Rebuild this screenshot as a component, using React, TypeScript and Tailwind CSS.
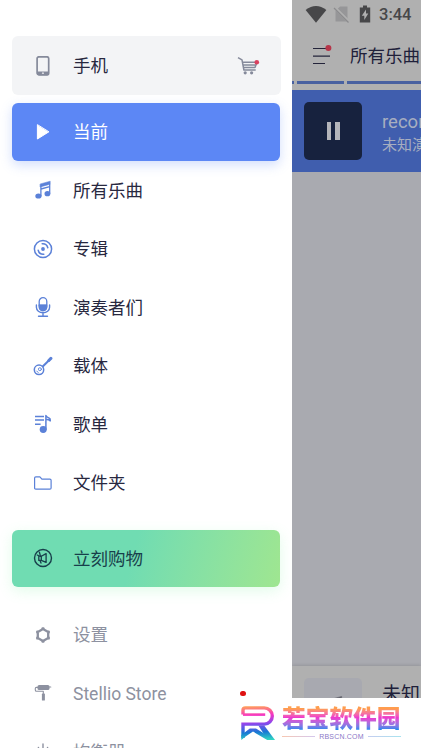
import type { ReactNode } from 'react';
import { clsx } from 'clsx';

const font = "font-['Roboto','Noto_Sans_CJK_SC',sans-serif]";

function Icon({ children, className }: { children: ReactNode; className?: string }) {
  return (
    <svg
      viewBox="0 0 20 20"
      className={clsx('shrink-0', className ?? 'size-5')}
      fill="none"
      stroke="currentColor"
      strokeWidth="1.4"
      strokeLinecap="round"
      strokeLinejoin="round"
    >
      {children}
    </svg>
  );
}

const PhoneIcon = () => (
  <Icon className="size-5 text-[#858a9b]">
    <rect x="4.1" y=".8" width="11.6" height="18" rx="1.8" strokeWidth="1.7" />
    <path d="M4 15.5h12v2.2q0 1.5-1.5 1.5h-9Q4 19.2 4 17.7Z" fill="currentColor" stroke="none" />
    <path d="M9.5 17.2h.9" stroke="#f3f4f6" strokeWidth="1.3" />
  </Icon>
);

const PlayIcon = () => (
  <Icon className="size-5 text-white">
    <path d="M4.4 3v14L15.6 10Z" fill="currentColor" strokeWidth="1" />
  </Icon>
);

const NotesIcon = ({ className }: { className?: string }) => (
  <Icon className={className}>
    <path d="M7.4 3.9 17.2 1.2v3L7.4 6.9Z" fill="currentColor" strokeWidth=".5" />
    <path d="M7.9 5v11M16.7 4.5v9M8 9l8.6-2.4" strokeWidth="1.3" />
    <ellipse cx="5.4" cy="16" rx="3.1" ry="2.6" fill="currentColor" stroke="none" />
    <ellipse cx="14.4" cy="13.7" rx="2.9" ry="2.6" fill="currentColor" stroke="none" />
  </Icon>
);

const DiscIcon = () => (
  <Icon>
    <circle cx="10" cy="10" r="8.6" strokeWidth="1.5" />
    <circle cx="10" cy="10" r="1.9" fill="currentColor" stroke="none" />
    <path d="M9.2 4.8a5.3 5.3 0 0 1 5.6 4M10.8 15.2a5.3 5.3 0 0 1-5.6-4" strokeWidth="1.5" />
  </Icon>
);

const MicIcon = () => (
  <Icon>
    <rect x="6.2" y=".7" width="7.6" height="12.9" rx="3.8" strokeWidth="1.3" />
    <path d="M6.2 7.8h7.6v2.3a3.8 3.8 0 0 1-7.6 0Z" fill="currentColor" strokeWidth=".8" />
    <path d="M3.4 8v2.2a6.6 5.6 0 0 0 13.2 0V8M10 16v3M5.5 19.2h9" strokeWidth="1.4" />
  </Icon>
);

const BanjoIcon = () => (
  <Icon>
    <circle cx="6" cy="13.8" r="4.7" strokeWidth="1.5" />
    <circle cx="6.9" cy="13.2" r="1.5" strokeWidth=".9" />
    <path d="m3.7 15 1.5 1.5" strokeWidth="1" />
    <path d="m9.7 10.4 6.4-6.1" strokeWidth="2.1" />
    <path d="m15.8 4.5 2.1-2.1" strokeWidth="3" />
  </Icon>
);

const PlaylistIcon = () => (
  <Icon>
    <path d="M2 2.5h9M2 6h9M2 10.3h5.6" strokeWidth="1.4" strokeLinecap="butt" />
    <ellipse cx="10.2" cy="15.5" rx="3.5" ry="3.4" fill="currentColor" stroke="none" />
    <path d="M12.9 15.5V1.5q1 2 3 2.4 1.7.6 1.4 2.9-1.8-1.5-4.4-1.2" strokeWidth="1.5" />
  </Icon>
);

const FolderIcon = () => (
  <Icon>
    <path
      d="M1.6 15V5q0-1.2 1.2-1.2h4.1l2 2.3h8q1.2 0 1.2 1.2V15q0 1.2-1.2 1.2H2.8Q1.6 16.2 1.6 15Z"
      strokeWidth="1.2"
    />
  </Icon>
);

const MegaphoneIcon = () => (
  <Icon className="size-5 text-[#183f4b]">
    <circle cx="10" cy="10" r="8.5" strokeWidth="1.4" />
    <path d="m8.3 8.2 4.8-2.6v8.8l-4.8-2H5.8V8.2ZM8.3 8.2v4.2M7 12.5l1 2.6M6.4 4.2l.9 3.2M4.2 7l4.2 2" strokeWidth="1.3" />
  </Icon>
);

const NutIcon = () => (
  <Icon>
    <path d="M10 4 15.2 7v6L10 16l-5.2-3V7Z" strokeWidth="2.3" />
    <path
      d="M9.6 3.5h.8M15.7 6.6v.7M15.7 12.8v.6M9.6 16.5h.8M4.3 12.8v.6M4.3 6.6v.7"
      strokeWidth="2.4"
    />
  </Icon>
);

const RollerIcon = () => (
  <Icon>
    <rect x="4.5" y="2.1" width="12" height="5" rx="1.6" fill="currentColor" stroke="none" />
    <path d="M16 4h1.8M4.9 4.4H3.4q-1.1 0-1.1 1.2V7q0 1.3 1.2 1.3h6.8v2.3" strokeWidth="1.1" />
    <rect x="8.9" y="10.6" width="3" height="7" rx=".6" fill="currentColor" stroke="none" />
  </Icon>
);

const EqualizerIcon = () => (
  <Icon>
    <path d="M5.4 5.5 7 9M10 2v8M14.6 5.5 13 9" strokeWidth="1.4" />
  </Icon>
);

const CartIcon = () => (
  <svg viewBox="0 0 24 20" className="h-5 w-6" fill="none" stroke="#858a9b" strokeWidth="1.5">
    <path d="M1 1.6 5 3.8l1.9 10.2h11.8M5.4 6.3H20l-2 5.2H6.6M6.1 9h12.7" strokeLinejoin="round" />
    <circle cx="8.2" cy="16.8" r="1.6" fill="#858a9b" stroke="none" />
    <circle cx="14.6" cy="16.8" r="1.6" fill="#858a9b" stroke="none" />
    <circle cx="19.8" cy="6.2" r="2.3" fill="#d9415f" stroke="none" />
  </svg>
);

const library = [
  { label: '所有乐曲', icon: <NotesIcon /> },
  { label: '专辑', icon: <DiscIcon /> },
  { label: '演奏者们', icon: <MicIcon /> },
  { label: '载体', icon: <BanjoIcon /> },
  { label: '歌单', icon: <PlaylistIcon /> },
  { label: '文件夹', icon: <FolderIcon /> },
];

function Row({ icon, label, className }: { icon: ReactNode; label: string; className?: string }) {
  return (
    <div className={clsx('flex shrink-0 items-center gap-5 pl-[21px] text-[17.5px] leading-none', className)}>
      {icon}
      <span className="pt-[2px] whitespace-nowrap">{label}</span>
    </div>
  );
}

function Drawer() {
  return (
    <nav className="flex h-full w-[292px] shrink-0 flex-col overflow-hidden bg-white pt-9 pr-[11.5px] pl-3 text-[#28283f]">
      <div className="flex h-[59px] shrink-0 items-center justify-between rounded-md bg-[#f3f4f6] pr-5">
        <Row icon={<PhoneIcon />} label="手机" />
        <CartIcon />
      </div>
      <Row
        icon={<PlayIcon />}
        label="当前"
        className="mt-2 mr-[0.5px] h-[57.5px] rounded-md bg-[#5c87f5] text-white shadow-[0_4px_12px_rgba(92,135,245,0.28)]"
      />
      <div className="mt-[0.5px] flex flex-col text-[#5b81d8]">
        {library.map((item) => (
          <Row
            key={item.label}
            icon={item.icon}
            label={item.label}
            className="h-[58.5px] [&>span]:text-[#28283f]"
          />
        ))}
      </div>
      <Row
        icon={<MegaphoneIcon />}
        label="立刻购物"
        className="mt-[17.5px] mr-[0.5px] h-[57.5px] rounded-md bg-linear-105 from-[#70dcb2] from-45% to-[#9fe690] text-[#183f4b] shadow-[0_4px_14px_rgba(112,240,150,0.2)]"
      />
      <div className="mt-[18.5px] flex flex-col text-[#8d91a0]">
        <Row icon={<NutIcon />} label="设置" className="h-[58.5px]" />
        <div className="flex items-center justify-between pr-[35px]">
          <Row icon={<RollerIcon />} label="Stellio Store" className="h-[58.5px]" />
          <span className="size-[5.5px] rounded-full bg-[#df1111]" />
        </div>
        <Row icon={<EqualizerIcon />} label="均衡器" className="h-[58.5px]" />
      </div>
    </nav>
  );
}

function StatusBar() {
  return (
    <div className="flex h-7 items-center pl-[13px] text-[#474749]">
      <svg viewBox="0 0 22 18" className="h-[18px] w-[22px]" fill="currentColor">
        <path d="M.6 5q10.4-8 20.8 0L11 17.7Z" />
      </svg>
      <svg viewBox="0 0 18 18" className="ml-[6px] h-[18px] w-[18px]">
        <path d="M7 1.5h7.5v15h-12V6Z" fill="#969698" />
        <path d="m1.2 2 14.3 14.3" stroke="#b0b0b0" strokeWidth="3" />
        <path d="m1 3 14.5 14.5" stroke="#8b8b8d" strokeWidth="1.3" />
      </svg>
      <svg viewBox="0 0 12 18" className="ml-[8px] h-[18px] w-3">
        <path d="M4 .5h4v2h3.2v15H.8v-15H4Z" fill="currentColor" />
        <path d="M7 4.5 2.8 10.8h2.5v4.3l4-6.5H7Z" fill="#b0b0b0" />
      </svg>
      <span className="ml-[8px] pt-[3px] text-[16.5px] leading-none font-medium">3:44</span>
    </div>
  );
}

function Player() {
  return (
    <main className="flex h-full min-w-0 flex-1 flex-col overflow-hidden bg-[#a9aab0] whitespace-nowrap">
      <header className="h-[90px] shrink-0 bg-[#b0b0b0]">
        <StatusBar />
        <div className="flex h-[53px] items-center text-[#20203a]">
          <svg viewBox="0 0 20 22" className="ml-[20px] h-[22px] w-5 shrink-0">
            <path d="M1 4.5h15M1 12.2h17M1 19.5h12" stroke="#24243a" strokeWidth="1.2" />
            <circle cx="16.4" cy="4" r="3" fill="#b63549" />
          </svg>
          <span className="ml-[18px] pt-[4px] text-[17.5px]">所有乐曲</span>
        </div>
        <div className="flex h-[2.5px] gap-[3px]">
          <span className="w-0.5 bg-[#4961a0]" />
          <span className="w-[47px] bg-[#4961a0]" />
          <span className="flex-1 bg-[#4961a0]" />
        </div>
      </header>
      <div className="flex h-[82px] shrink-0 items-center gap-5 bg-[#405eae] pl-3 text-[#a7aec0]">
        <div className="flex size-[58px] shrink-0 items-center justify-center gap-1 rounded-[5px] bg-[#17223e]">
          <span className="h-[18px] w-[4.5px] bg-[#b4b5ba]" />
          <span className="h-[18px] w-[4.5px] bg-[#b4b5ba]" />
        </div>
        <div className="flex flex-col gap-[2px] pt-[3px]">
          <span className="text-[18.5px] leading-[22px]">recording</span>
          <span className="text-[15px] leading-5">未知演奏者</span>
        </div>
      </div>
      <footer className="mt-auto flex h-[82px] shrink-0 bg-[#b0b0b0] pt-3 pl-3 shadow-[0_-1px_3px_rgba(0,0,0,0.12)]">
        <div className="flex size-[58px] shrink-0 items-center justify-center rounded-[5px] bg-[#a8a9b0] text-[#60616b]">
          <NotesIcon className="size-6" />
        </div>
        <span className="ml-5 pt-[5px] text-[19px] leading-6 text-[#20203a]">未知</span>
      </footer>
    </main>
  );
}

function SiteMark() {
  return (
    <div className="absolute right-0 bottom-0 flex h-[50px] w-[185px] gap-1.5 bg-white pt-2 pl-1">
      <svg viewBox="0 0 36 36" className="size-9 shrink-0" fill="none">
        <defs>
          <linearGradient id="mark" x1="15" y1="0" x2="17" y2="34" gradientUnits="userSpaceOnUse">
            <stop offset="0" stopColor="#ff9f5a" />
            <stop offset=".27" stopColor="#f735c2" />
            <stop offset=".52" stopColor="#8b48ed" />
            <stop offset=".77" stopColor="#1878d4" />
            <stop offset="1" stopColor="#30d4c3" />
          </linearGradient>
        </defs>
        <g stroke="url(#mark)">
          <path d="M3 8.5V4.2Q3 1.9 5.4 1.9H24.2a8.1 8.1 0 0 1 0 16.2H3V32" strokeWidth="3.4" />
          <path d="M3 8.6H25.2" strokeWidth="2.6" />
        </g>
        <path d="M1.3 34V29L9.8 22.4H16L34.6 34H27.2L13 25.6 5.6 30.4Z" fill="url(#mark)" />
        <path d="M18.4 19.5h5.8L35 34H27.5Z" fill="url(#mark)" />
      </svg>
      <div className="flex w-[119px] flex-col">
        <span className="bg-linear-to-b from-[#ff9d4d] from-10% via-[#ee35cf] via-45% to-[#2686ee] to-90% bg-clip-text text-[23.7px] leading-[26px] font-black whitespace-nowrap text-transparent">
          若宝软件园
        </span>
        <div className="flex h-2 items-center gap-1">
          <span className="h-px flex-1 bg-linear-to-r from-[#f7c7b1] to-[#d4c7ee]" />
          <span className="font-['Liberation_Sans',sans-serif] text-[7px] leading-none tracking-[0.2px] text-[#8b78c8]">
            RBSCN.COM
          </span>
          <span className="h-px flex-1 bg-linear-to-r from-[#c5cdf0] to-[#a8e3ef]" />
        </div>
      </div>
    </div>
  );
}

export default function App() {
  return (
    <div className={clsx('relative flex h-[748px] w-[421px] overflow-hidden', font)}>
      <Drawer />
      <Player />
      <SiteMark />
    </div>
  );
}
